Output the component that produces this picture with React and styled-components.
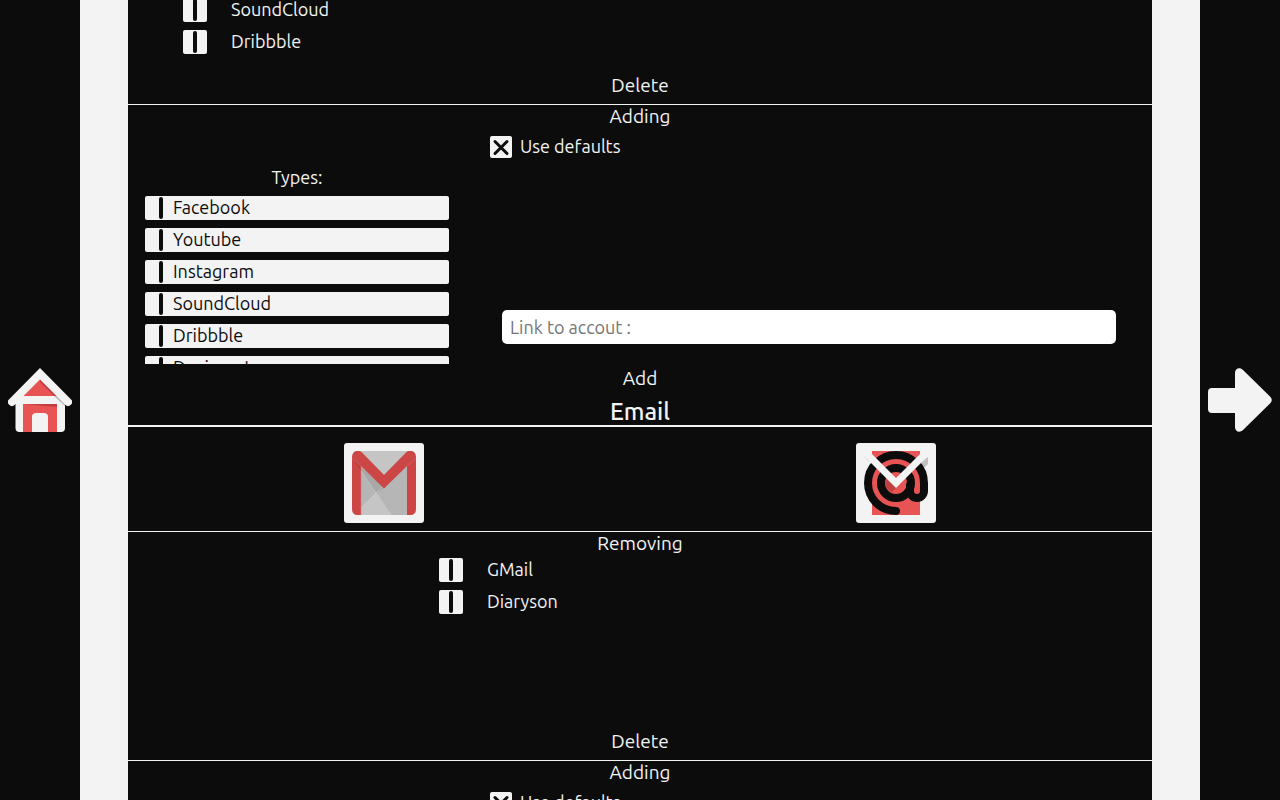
import React from "react";
import styled, { createGlobalStyle, css } from "styled-components";

const INK = "#0c0c0c";
const PAPER = "#f3f3f3";
const RED = "#e85354";
const DARK_RED = "#c23f41";

const GlobalStyle = createGlobalStyle`
  *, *::before, *::after { box-sizing: border-box; }
  body {
    margin: 0;
    background: ${INK};
    color: ${PAPER};
    font-family: Ubuntu, "Noto Sans", sans-serif;
    font-size: 18px;
    line-height: 22px;
  }
  button, input { font: inherit; color: inherit; }
`;

const Page = styled.div`
  display: grid;
  grid-template-columns: 80px minmax(0, 1fr) 80px;
  height: 100vh;
`;

const SideButton = styled.button`
  display: flex;
  align-items: center;
  justify-content: center;
  padding: 0;
  border: 0;
  background: ${INK};
  cursor: pointer;
`;

const Main = styled.main`
  border: solid ${PAPER};
  border-width: 0 48px;
  overflow: hidden;
`;

const Panel = styled.section`
  display: flex;
  flex-direction: column;
  ${(p) => p.$ruled && css`border-top: 1px solid ${PAPER};`}
`;

const ScrolledPanel = styled(Panel)`
  height: 104px;
  justify-content: flex-end;
  overflow: hidden;
`;

const PanelTitle = styled.h3`
  margin: 0;
  font-size: 19px;
  font-weight: 400;
  text-align: center;
`;

const GroupTitle = styled.h2`
  margin: 0;
  padding-top: 7px;
  border-bottom: 2px solid ${PAPER};
  font-size: 24px;
  font-weight: 500;
  line-height: 26px;
  text-align: center;
`;

const ActionButton = styled.button`
  align-self: center;
  flex: none;
  height: 28px;
  padding: 0 16px;
  border: 0;
  background: none;
  font-size: 19px;
  line-height: 28px;
  cursor: pointer;
`;

const DeleteButton = styled(ActionButton)`
  margin-bottom: 5px;
`;

const RemoveList = styled.ul`
  display: grid;
  grid-template-columns: repeat(${(p) => p.$columns}, 1fr);
  align-content: start;
  justify-items: center;
  row-gap: 8px;
  flex: none;
  min-height: 173px;
  margin: 0;
  padding: 4px 0 17px;
  list-style: none;

  li { grid-column: 1; width: 402px; }
`;

const RemoveLabel = styled.label`
  display: flex;
  align-items: flex-start;
  gap: 24px;
  height: 24px;
`;

const BarTick = styled.input`
  appearance: none;
  display: flex;
  justify-content: center;
  align-items: center;
  flex: none;
  width: 24px;
  height: 24px;
  margin: 0;
  border-radius: 2px;
  background: ${PAPER};

  &::before {
    content: "";
    width: 4px;
    height: 22px;
    border-radius: 2px;
    background: ${INK};
  }
  &:checked::before { transform: rotate(45deg); }
`;

const AddGrid = styled.div`
  display: grid;
  grid-template-columns: 33% 67%;
  height: 237px;
`;

const TypeColumn = styled.fieldset`
  display: flex;
  flex-direction: column;
  justify-content: flex-end;
  min-width: 0;
  margin: 0;
  padding: 39px 17px 0;
  border: 0;
`;

const TypeHeading = styled.div`
  height: 30px;
  text-align: center;
`;

const TypeList = styled.div`
  display: flex;
  flex-direction: column;
  gap: 8px;
  height: 168px;
  overflow: hidden;
`;

const TypeOption = styled.label`
  display: flex;
  align-items: flex-start;
  flex: none;
  height: 24px;
  padding-left: 4px;
  border-radius: 2px;
  background: ${PAPER};
  color: ${INK};
`;

const DetailColumn = styled.div`
  display: flex;
  flex-direction: column;
  justify-content: space-between;
  padding: 9px 36px 20px;
`;

const DefaultsLabel = styled.label`
  display: flex;
  align-items: flex-start;
  gap: 8px;
  height: 22px;
  margin-left: -12px;
  line-height: 20px;
`;

const CrossTick = styled.input`
  appearance: none;
  display: grid;
  place-content: center;
  place-items: center;
  flex: none;
  width: 22px;
  height: 22px;
  margin: 0;
  border-radius: 2px;
  background: ${PAPER};

  &::before, &::after {
    content: "";
    grid-area: 1 / 1;
    width: 20px;
    height: 3px;
    border-radius: 2px;
    background: ${INK};
    transform: rotate(45deg);
  }
  &::after { transform: rotate(-45deg); }
  &:not(:checked)::before, &:not(:checked)::after { transform: rotate(90deg); }
`;

const LinkInput = styled.input`
  width: 100%;
  height: 34px;
  padding: 0 8px;
  border: 0;
  border-radius: 5px;
  background: #fff;
  color: ${INK};

  &::placeholder { color: #757575; opacity: 1; }
`;

const ProviderRow = styled.div`
  display: grid;
  grid-template-columns: 1fr 1fr;
  justify-items: center;
  padding: 16px 0 8px;
`;

const ProviderButton = styled.button`
  display: flex;
  width: 80px;
  height: 80px;
  padding: 8px;
  border: 0;
  border-radius: 3px;
  background: ${PAPER};
  cursor: pointer;
`;

const Icon = (props) => (
  <svg width="64" height="64" viewBox="0 0 64 64" fill="none" aria-hidden="true" {...props} />
);

const HomeIcon = () => (
  <Icon>
    <path d="M7.500 28H57V60Q57 64 53 64H11.500Q7.500 64 7.500 60Z" fill={PAPER} />
    <path d="M14 28L32 10L50 28Z M15 36H49V64H15Z" fill={RED} />
    <path d="M32 11L49 28H46L32 14Z M15 36H49V39Z" fill={DARK_RED} />
    <path d="M24 64V49Q24 45 28 45H36Q40 45 40 49V64Z" fill={PAPER} />
    <path d="M46 28H51L57 34V38Z" fill="#b5b5b5" />
    <path d="M4 34L32 5.700L60 34" stroke={PAPER} strokeWidth="8" strokeLinecap="round" />
  </Icon>
);

const NextIcon = () => (
  <Icon>
    <path
      d="M4 20H27V5C27 0 32 -1 35 2L62.500 29Q65 32 62.500 35L35 62C32 65 27 64 27 59V45H4Q0 45 0 41V24Q0 20 4 20Z"
      fill={PAPER}
    />
  </Icon>
);

const GmailIcon = () => (
  <Icon>
    <rect x="3" width="58" height="64" fill="#b6b6b6" />
    <path d="M6 0H58L32 26Z" fill="#c5c5c5" />
    <path d="M9 57L24 42L39 64H9Z" fill="#c5c5c5" />
    <path d="M9 15L32 37L24 42L9 20Z" fill="#a8a8a8" />
    <path
      d="M0 6C0 0 6 -2 10 1.500L32 24L54 1.500C58 -2 64 0 64 6V58Q64 64 58 64H55V15L32 37.500L9 15V64H6Q0 64 0 58Z"
      fill="#cc4646"
    />
    <path d="M0 7L9 15V20Z" fill="#b83f3f" />
    <path d="M0 7L9 15V64M64 7L55 15" stroke="#dc7777" strokeWidth="0.5" />
    <path d="M9 20L39 64M9 57L30 36" stroke="#d2d2d2" strokeWidth="0.5" />
  </Icon>
);

const DiarysonIcon = () => (
  <Icon>
    <path d="M8 0H56V64H8Z" fill={RED} />
    <path d="M56 12L64 6V13L60 17Z" fill="#c0c0c0" />
    <path d="M0 5L5 11L8 8L3 3Z" fill="#d0d0d0" />
    <g stroke={INK} strokeWidth="8" strokeLinecap="round">
      <circle cx="32" cy="32" r="15" />
      <path d="M32 60A28 28 0 1 1 60 32V40A7 7 0 0 1 46 40V34" />
    </g>
    <path d="M23 27L21 33Q22 38 28 41L33 36Z" fill={DARK_RED} />
    <path d="M3 3L32 32L61 3" stroke={PAPER} strokeWidth="7" strokeLinecap="round" />
  </Icon>
);

const SOCIAL = ["Facebook", "Youtube", "Instagram", "SoundCloud", "Dribbble"];
const MAIL = ["GMail", "Diaryson"];

const RemoveItems = ({ names, columns }) => (
  <RemoveList $columns={columns}>
    {names.map((name) => (
      <li key={name}>
        <RemoveLabel>
          <BarTick type="checkbox" />
          {name}
        </RemoveLabel>
      </li>
    ))}
  </RemoveList>
);

const AddPanel = ({ group, types }) => (
  <Panel $ruled>
    <PanelTitle>Adding</PanelTitle>
    <AddGrid>
      <TypeColumn aria-label="Types">
        <TypeHeading>Types:</TypeHeading>
        <TypeList>
          {types.map((type) => (
            <TypeOption key={type}>
              <BarTick type="radio" name={`${group}-type`} />
              {type}
            </TypeOption>
          ))}
        </TypeList>
      </TypeColumn>
      <DetailColumn>
        <DefaultsLabel>
          <CrossTick type="checkbox" defaultChecked />
          Use defaults
        </DefaultsLabel>
        <LinkInput type="text" placeholder="Link to accout :" aria-label="Link to accout" />
      </DetailColumn>
    </AddGrid>
    <ActionButton type="button">Add</ActionButton>
  </Panel>
);

export default function App() {
  return (
    <>
      <GlobalStyle />
      <Page>
        <SideButton type="button" aria-label="Home">
          <HomeIcon />
        </SideButton>
        <Main>
          <ScrolledPanel>
            <RemoveItems names={SOCIAL} columns={2} />
            <DeleteButton type="button">Delete</DeleteButton>
          </ScrolledPanel>
          <AddPanel group="social" types={[...SOCIAL, "Devianart"]} />
          <GroupTitle>Email</GroupTitle>
          <ProviderRow>
            <ProviderButton type="button" aria-label="GMail">
              <GmailIcon />
            </ProviderButton>
            <ProviderButton type="button" aria-label="Diaryson">
              <DiarysonIcon />
            </ProviderButton>
          </ProviderRow>
          <Panel $ruled>
            <PanelTitle>Removing</PanelTitle>
            <RemoveItems names={MAIL} columns={1} />
            <DeleteButton type="button">Delete</DeleteButton>
          </Panel>
          <AddPanel group="mail" types={MAIL} />
        </Main>
        <SideButton type="button" aria-label="Next">
          <NextIcon />
        </SideButton>
      </Page>
    </>
  );
}
